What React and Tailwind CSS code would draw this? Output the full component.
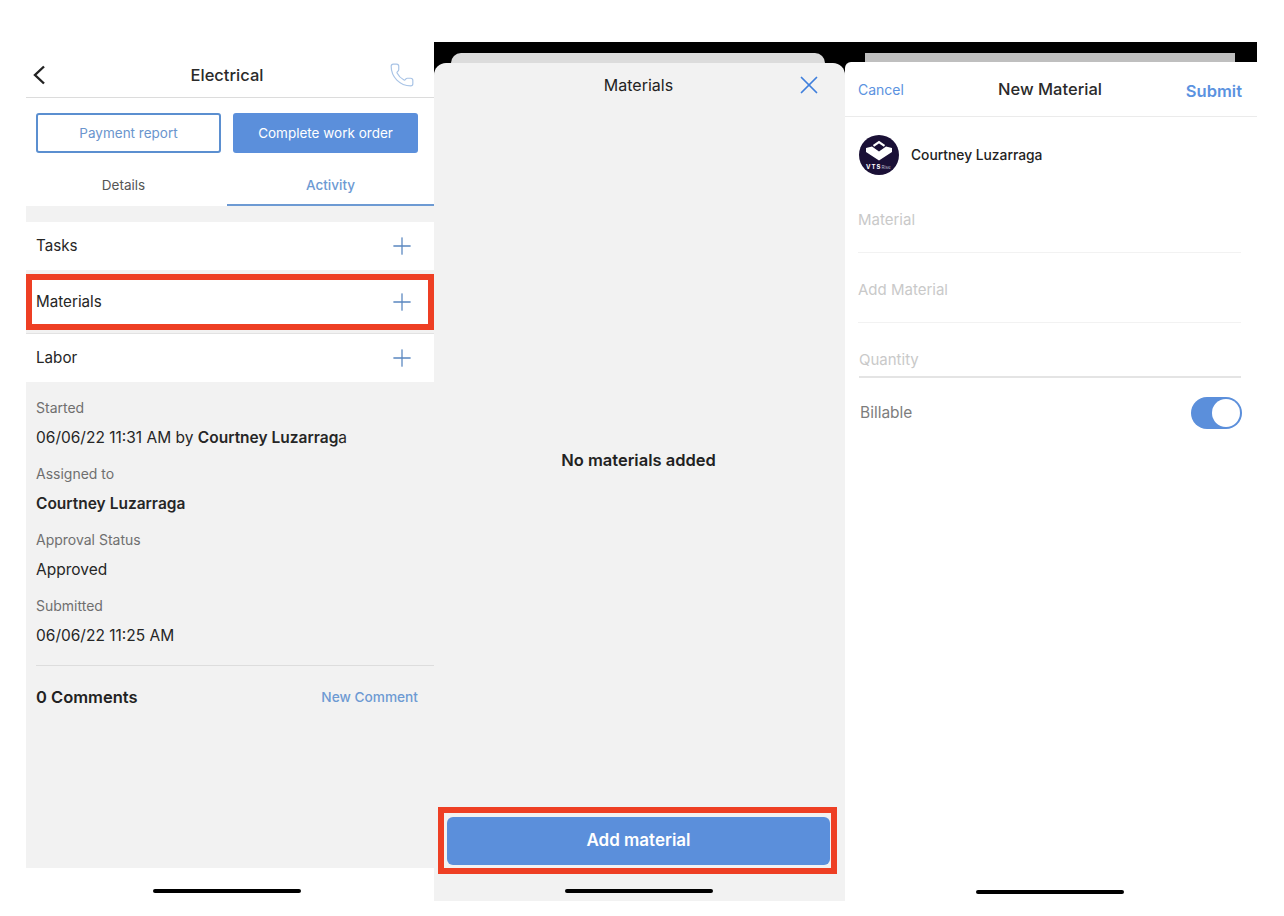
import React from 'react';
import { Phone, Plus, X } from 'lucide-react';

const font = { fontFamily: 'Inter, "Liberation Sans", sans-serif' };

function HomeBar() {
  return <div className="w-[148px] h-1 rounded-full bg-black mx-auto" />;
}

function ActivityRow({ label, boxed }) {
  return (
    <div className={`flex items-center justify-between bg-white ${boxed ? 'h-14 border-[6px] border-[#ee3f24] pl-1 pr-[12px]' : 'h-12 pl-[10px] pr-[18px]'}`}>
      <span className="text-[15.2px] text-[#262626]">{label}</span>
      <Plus className="w-7 h-7 text-[#5a87c0]" strokeWidth={1.1} />
    </div>
  );
}

function Info({ label, children }) {
  return (
    <div className="h-[66px]">
      <p className="text-[14px] leading-4 text-[#6f6f6f]">{label}</p>
      <p className="text-[15.5px] leading-5 text-[#262626] mt-[12px]">{children}</p>
    </div>
  );
}

function FormField({ label }) {
  return (
    <div className="ml-[13px] mr-4 h-[70px] pt-[24px] border-b border-[#f2f2f2]">
      <span className="text-[15px] leading-5 text-[#c9c9c9]">{label}</span>
    </div>
  );
}

function WorkOrder() {
  return (
    <div className="w-[408px] h-[859px] flex flex-col bg-white">
      <div className="h-[56px] shrink-0 grid grid-cols-[1fr_auto_1fr] items-center border-b border-[#dcdcdc] pl-[6px] pr-[12px] pt-[11px]">
        <svg width="14" height="20" viewBox="0 0 14 20" fill="none">
          <path d="M12 1.5 L3 10 L12 18.5" stroke="#222" strokeWidth="2.4" />
        </svg>
        <span className="text-[16.5px] font-medium text-[#2a2a2a]">Electrical</span>
        <Phone className="w-[26px] h-[26px] text-[#a9c4e6] justify-self-end mr-[7px]" strokeWidth={1.1} />
      </div>
      <div className="flex gap-3 pl-[10px] pt-[15px]">
        <button className="w-[185px] h-10 rounded-[3px] border-2 border-[#5b8fd0] bg-white text-[13.5px] text-[#6a95cd]">Payment report</button>
        <button className="w-[185px] h-10 rounded-[3px] bg-[#5b8fdb] text-[13.5px] text-white">Complete work order</button>
      </div>
      <div className="flex h-[53px] shrink-0">
        <div className="w-[201px] flex items-center justify-center pt-[11px] pr-[6px] text-[13.5px] text-[#555]">Details</div>
        <div className="flex-1 flex items-center justify-center pt-[13px] border-b-2 border-[#6d9ad3] text-[13.5px] font-medium text-[#6d9ad3]">Activity</div>
      </div>
      <div className="flex-1 bg-[#f2f2f2] pt-4 flex flex-col">
        <ActivityRow label="Tasks" />
        <div className="h-1" />
        <ActivityRow label="Materials" boxed />
        <div className="h-1 border-b border-[#e2e2e2]" />
        <ActivityRow label="Labor" />
        <div className="pl-[10px] pt-[18px]">
          <Info label="Started">06/06/22 11:31 AM by <span className="font-semibold">Courtney Luzarrag</span>a</Info>
          <Info label="Assigned to"><span className="font-semibold">Courtney Luzarraga</span></Info>
          <Info label="Approval Status">Approved</Info>
          <Info label="Submitted">06/06/22 11:25 AM</Info>
          <div className="h-px bg-[#dddddd] mt-px" />
          <div className="flex items-center justify-between pr-4 pt-[19px]">
            <span className="text-[16.5px] font-semibold text-[#222]">0 Comments</span>
            <span className="text-[13.7px] font-medium text-[#6d9ad3]">New Comment</span>
          </div>
        </div>
      </div>
      <div className="h-[33px] shrink-0 pt-[21px] pr-[6px]">
        <HomeBar />
      </div>
    </div>
  );
}

function MaterialsSheet() {
  return (
    <div className="w-[411px] h-[859px] flex flex-col bg-black pt-[11px]">
      <div className="h-[10px] ml-[17px] mr-5 rounded-t-xl bg-[#dcdcdc] shrink-0" />
      <div className="flex-1 flex flex-col rounded-t-xl bg-[#f2f2f2]">
        <div className="relative h-[44px] shrink-0 flex items-center justify-center pr-[2px]">
          <span className="text-[16px] text-[#222]">Materials</span>
          <X className="absolute right-[21px] top-[7px] w-[30px] h-[30px] text-[#3f7fdc]" strokeWidth={1.4} />
        </div>
        <div className="flex-1 flex items-center justify-center pt-[6px] pr-[2px]">
          <span className="text-[16.5px] font-semibold text-[#222]">No materials added</span>
        </div>
        <div className="ml-1 mr-2 h-[67px] border-[6px] border-[#ee3f24] pl-[3px] pr-[1px] pt-[4px] pb-[3px] shrink-0">
          <button className="w-full h-full rounded-md bg-[#5b8fdb] text-[17px] font-semibold text-white">Add material</button>
        </div>
        <div className="h-[27px] shrink-0 pt-[15px] pr-[2px]">
          <HomeBar />
        </div>
      </div>
    </div>
  );
}

function RiseLogo() {
  return (
    <svg width="40" height="40" viewBox="0 0 40 40" className="shrink-0">
      <circle cx="20" cy="20" r="20" fill="#1a1036" />
      <path d="M14.5 10.8 L20 7 L25.5 10.8" fill="none" stroke="#fff" strokeWidth="2.2" />
      <path d="M7 13 L13 11.5 L20 16.5 L27 11.5 L33 13 L33 17 L20 25.5 L7 17 Z" fill="#fff" />
      <text x="7" y="33.5" fontSize="6" fontWeight="700" letterSpacing="1" fill="#fff" style={font}>VTS</text>
      <text x="22.5" y="33.5" fontSize="4.6" fill="#b9b6c6" style={font}>Rise</text>
    </svg>
  );
}

function NewMaterial() {
  return (
    <div className="w-[412px] h-[859px] flex flex-col bg-black pt-[11px]">
      <div className="h-[9px] ml-5 mr-[22px] bg-[#bfbfbf] shrink-0" />
      <div className="flex-1 flex flex-col bg-white rounded-tl-md">
        <div className="relative h-[55px] shrink-0 border-b border-[#ebebeb] flex items-center justify-between pl-[13px] pr-[15px] pt-[1px]">
          <span className="text-[14px] text-[#5b92e0]">Cancel</span>
          <span className="absolute left-0 right-[2px] text-center text-[16.5px] font-medium text-[#2a2a2a]">New Material</span>
          <span className="text-[16.5px] font-semibold text-[#5b92e0] pt-1">Submit</span>
        </div>
        <div className="flex items-center gap-3 pl-[14px] pt-[18px] pb-[8px]">
          <RiseLogo />
          <span className="text-[13.8px] font-medium text-[#222] pt-px">Courtney Luzarraga</span>
        </div>
        <FormField label="Material" />
        <FormField label="Add Material" />
        <div className="ml-[14px] mr-4 h-[55px] pt-[24px] border-b-2 border-[#e4e4e4]">
          <span className="text-[15px] leading-5 text-[#c9c9c9]">Quantity</span>
        </div>
        <div className="flex items-center justify-between pl-[15px] pr-[15px] pt-[19px]">
          <span className="text-[15.5px] text-[#7d7d7d]">Billable</span>
          <div className="w-[51px] h-8 rounded-full bg-[#5b8fdb] flex items-center justify-end pr-[2px]">
            <div className="w-7 h-7 rounded-full bg-white" />
          </div>
        </div>
        <div className="flex-1" />
        <div className="h-[11px] shrink-0 pr-[2px]">
          <HomeBar />
        </div>
      </div>
    </div>
  );
}

export default function App() {
  return (
    <div className="w-[1284px] h-[916px] bg-white flex items-start pl-[26px] pt-[42px]" style={font}>
      <WorkOrder />
      <MaterialsSheet />
      <NewMaterial />
    </div>
  );
}
